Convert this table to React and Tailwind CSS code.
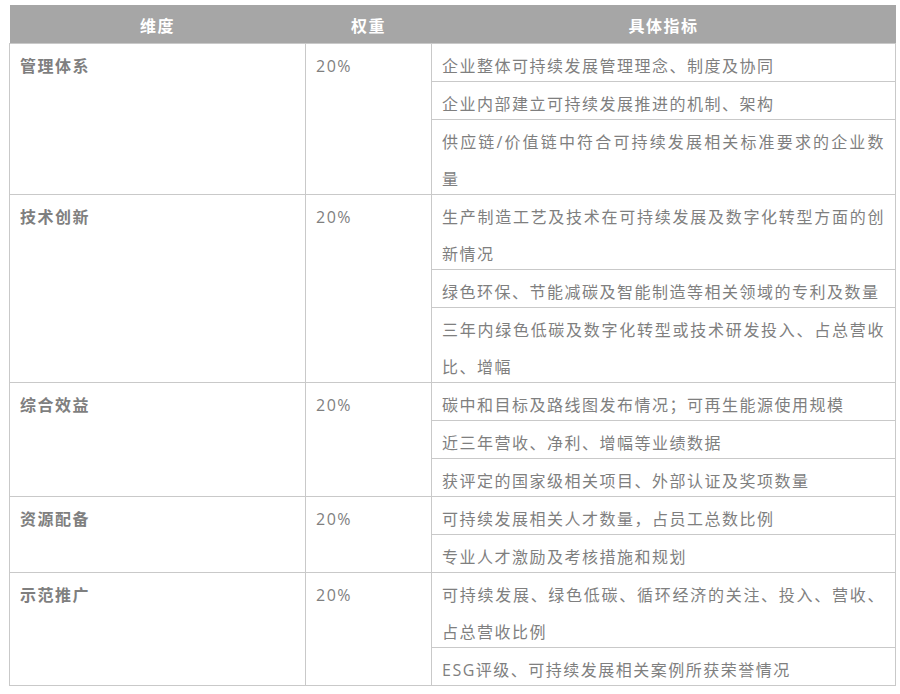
import React from "react";

const rows = [
  {
    dim: "管理体系",
    w: "20%",
    items: [
      "企业整体可持续发展管理理念、制度及协同",
      "企业内部建立可持续发展推进的机制、架构",
      "供应链/价值链中符合可持续发展相关标准要求的企业数量",
    ],
  },
  {
    dim: "技术创新",
    w: "20%",
    items: [
      "生产制造工艺及技术在可持续发展及数字化转型方面的创新情况",
      "绿色环保、节能减碳及智能制造等相关领域的专利及数量",
      "三年内绿色低碳及数字化转型或技术研发投入、占总营收比、增幅",
    ],
  },
  {
    dim: "综合效益",
    w: "20%",
    items: [
      "碳中和目标及路线图发布情况；可再生能源使用规模",
      "近三年营收、净利、增幅等业绩数据",
      "获评定的国家级相关项目、外部认证及奖项数量",
    ],
  },
  {
    dim: "资源配备",
    w: "20%",
    items: [
      "可持续发展相关人才数量，占员工总数比例",
      "专业人才激励及考核措施和规划",
    ],
  },
  {
    dim: "示范推广",
    w: "20%",
    items: [
      "可持续发展、绿色低碳、循环经济的关注、投入、营收、占总营收比例",
      "ESG评级、可持续发展相关案例所获荣誉情况",
    ],
  },
];

const font = { fontFamily: '"Open Sans", "Noto Sans CJK SC", sans-serif' };

export default function App() {
  return (
    <div className="bg-white w-[900px] h-[694px] pt-[5px] pl-[9px]" style={font}>
      <table className="table-fixed border-collapse w-[886px] text-[16px] tracking-[1.5px] leading-[37px]">
        <colgroup>
          <col className="w-[296px]" />
          <col className="w-[126px]" />
          <col className="w-[464px]" />
        </colgroup>
        <thead>
          <tr className="bg-[#a6a6a6]">
            <th className="h-[38px] p-0 text-center font-bold text-white">
              <div className="translate-y-[3px]">维度</div>
            </th>
            <th className="h-[38px] p-0 text-center font-bold text-white">
              <div className="translate-y-[3px]">权重</div>
            </th>
            <th className="h-[38px] p-0 text-center font-bold text-white">
              <div className="translate-y-[3px]">具体指标</div>
            </th>
          </tr>
        </thead>
        <tbody>
          {rows.map((r) =>
            r.items.map((it, i) => (
              <tr key={r.dim + i}>
                {i === 0 && (
                  <td
                    rowSpan={r.items.length}
                    className="align-top border border-[#c9c9c9] px-[10px] py-0 font-bold text-[#7f7f7f]"
                  >
                    <div className="translate-y-[4px]">{r.dim}</div>
                  </td>
                )}
                {i === 0 && (
                  <td
                    rowSpan={r.items.length}
                    className="align-top border border-[#c9c9c9] px-[10px] py-0 text-[#7f7f7f]"
                  >
                    <div className="translate-y-[4px]">{r.w}</div>
                  </td>
                )}
                <td className="align-top border border-[#c9c9c9] pl-[10px] pr-[10px] py-0 text-[#7f7f7f] text-justify">
                  <div className="translate-y-[4px]">{it}</div>
                </td>
              </tr>
            ))
          )}
        </tbody>
      </table>
    </div>
  );
}
